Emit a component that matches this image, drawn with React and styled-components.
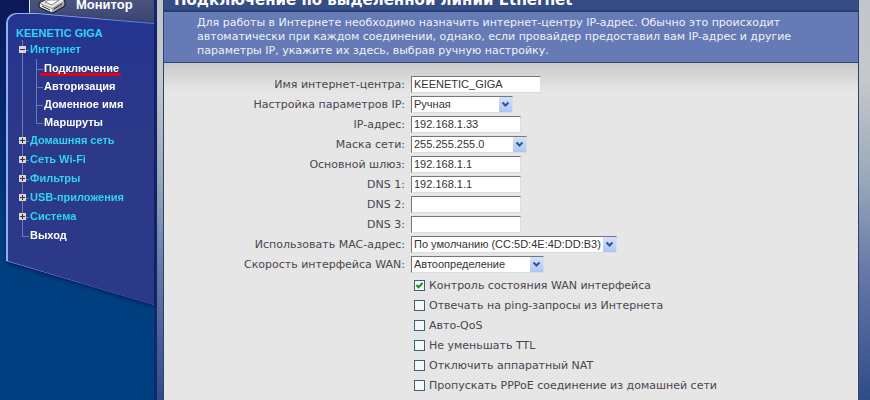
import { useState } from 'react'
import styled, { createGlobalStyle } from 'styled-components'

const GlobalStyle = createGlobalStyle`
  * {
    box-sizing: border-box;
  }
  body {
    margin: 0;
    background: #004080;
    font-family: 'DejaVu Sans', Verdana, sans-serif;
    font-size: 11px;
    color: #4c4450;
  }
`

const Page = styled.div`
  display: flex;
  height: 100vh;
  overflow: hidden;
`

const Sidebar = styled.aside`
  flex: 0 0 154px;
  padding-left: 6px;
  background: linear-gradient(#0c1858, #08246a 90px, #004080 240px);
  font-family: 'Liberation Sans', Arial, sans-serif;
  font-weight: bold;
`

const MonitorTab = styled.a`
  display: flex;
  align-items: flex-start;
  gap: 8px;
  height: 24px;
  margin-left: 23px;
  padding-left: 8px;
  border-left: 1px solid #dfe4f0;
  background: linear-gradient(#4a557e, #3a4372);
  color: #fff;
  font-size: 13px;
  line-height: 10px;
  text-decoration: none;
`

const MenuShadow = styled.div`
  position: relative;
  margin-top: -11px;
  filter: drop-shadow(0 2px 2px #06205c);
`

const MenuEdge = styled.div`
  padding: 1px 0 0 2px;
  border-top-left-radius: 10px;
  background: linear-gradient(100deg, #8fb0f4 20%, #5a76c4 80%);
  clip-path: polygon(0 0, 20% 0, 100% 10px, 100% 100%, 0 calc(100% - 44px));
`

const Menu = styled.nav`
  min-height: 291px;
  padding: 10px 0 0 8px;
  border-top-left-radius: 9px;
  background: linear-gradient(#24348f, #2c3888 120px);
  clip-path: polygon(0 0, 20% 0, 100% 10px, 100% 100%, 0 calc(100% - 44px));
`

const DeviceName = styled.div`
  height: 16px;
  color: #2fd3f5;
  font-size: 11px;
  line-height: 18px;
`

const Tree = styled.ul`
  margin: 0;
  padding: 0;
  list-style: none;
  line-height: ${(props) => props.$nested ? '18px' : '19px'};
`

const Branch = styled.li`
  position: relative;
  padding-left: 14px;
  &::before {
    content: '';
    position: absolute;
    left: 6px;
    top: 0;
    width: 6px;
    height: 10px;
    border-left: 1px solid #7079b4;
    border-bottom: 1px solid #7079b4;
  }
  &:not(:last-child)::after {
    content: '';
    position: absolute;
    left: 6px;
    top: 0;
    bottom: 0;
    border-left: 1px solid #7079b4;
  }
`

const Toggle = styled.button`
  position: absolute;
  z-index: 1;
  left: 3px;
  top: 6px;
  width: 7px;
  height: 7px;
  padding: 0;
  border: 0;
  background:
    linear-gradient(#333, #333) center / 5px 1px no-repeat,
    linear-gradient(#333, #333) center / ${(props) => props.$open ? '0 0' : '1px 5px'} no-repeat,
    #d9d6dc;
`

const MenuLink = styled.a`
  display: block;
  width: fit-content;
  color: ${(props) => props.$plain ? '#fff' : '#2fd3f5'};
  font-size: 11px;
  text-decoration: none;
`

const ActiveLink = styled(MenuLink)`
  margin-left: -4px;
  padding: 0 2px 0 4px;
  background: linear-gradient(#e8000e, #e8000e) 0 14px / 100% 3px no-repeat;
`

const Edge = styled.div`
  flex: 0 0 ${(props) => props.$left ? '9px' : '11px'};
  border-left: ${(props) => props.$left ? '3px solid #14266c' : '0'};
  background: linear-gradient(#c2c5ca, #c6c8ca 80px, #98a8b8 180px, #6878a8 270px, #2f4c88 400px);
`

const Main = styled.main`
  display: flex;
  flex: 1;
  flex-direction: column;
  min-width: 0;
  border: 1px solid #2c4272;
  border-width: 0 1px;
`

const Title = styled.h1`
  flex: none;
  height: 12px;
  margin: 0;
  padding-left: 10px;
  overflow: hidden;
  border-bottom: 2px solid #253d73;
  background: #354c84;
  color: #fff;
  font-size: 15px;
  line-height: 0;
  white-space: nowrap;
`

const Intro = styled.p`
  margin: 0;
  padding: 4px 60px 4px 33px;
  border-bottom: 1px solid #2c4272;
  background: #667bb5;
  color: #eef1fa;
  line-height: 14px;
`

const Form = styled.form`
  flex: 1;
  padding-top: 11px;
  background: linear-gradient(#cacaca, #e6e6e6 28px);
`

const Row = styled.div`
  display: grid;
  grid-template-columns: 241px 1fr;
  column-gap: 6px;
  align-items: center;
  height: 20px;
`

const Label = styled.label`
  text-align: right;
`

const TextInput = styled.input`
  width: ${(props) => props.$width}px;
  height: 17px;
  padding: 0 2px;
  border: 1px solid;
  border-color: #77757a #dcdcdc #dcdcdc #77757a;
  border-radius: 0;
  background: #fff;
  color: #333;
  font: 11px 'Liberation Sans', Arial, sans-serif;
`

const SelectBox = styled.div`
  position: relative;
  width: ${(props) => props.$width}px;
  height: 17px;
`

const Select = styled(TextInput).attrs({ as: 'select' })`
  display: block;
  width: 100%;
  appearance: none;
`

const Arrow = styled.svg`
  position: absolute;
  top: 1px;
  right: 1px;
  width: 13px;
  height: 15px;
  background: linear-gradient(#d4e2fb, #abc6f5);
  pointer-events: none;
`

const Options = styled.div`
  padding: 1px 0 0 250px;
`

const CheckRow = styled.div`
  display: flex;
  align-items: center;
  gap: 4px;
  height: 20px;
`

const Checkbox = styled.input`
  width: 11px;
  height: 11px;
  margin: 0;
  appearance: none;
  border: 1px solid #3c6078;
  background: #f4f8f8;
  &:checked {
    background: #f4f8f8 url("data:image/svg+xml,%3Csvg xmlns='http://www.w3.org/2000/svg' viewBox='0 0 9 9'%3E%3Cpath d='M1.5 4l2 2.3L7.5 2' fill='none' stroke='%23218a2c' stroke-width='2'/%3E%3C/svg%3E");
  }
`

const MENU = [
  { title: 'Интернет', items: ['Подключение', 'Авторизация', 'Доменное имя', 'Маршруты'] },
  { title: 'Домашняя сеть' },
  { title: 'Сеть Wi-Fi' },
  { title: 'Фильтры' },
  { title: 'USB-приложения' },
  { title: 'Система' },
]

const FIELDS = [
  { id: 'name', label: 'Имя интернет-центра:', value: 'KEENETIC_GIGA', width: 130 },
  { id: 'mode', label: 'Настройка параметров IP:', value: 'Ручная', width: 102, select: true },
  { id: 'ip', label: 'IP-адрес:', value: '192.168.1.33', width: 110 },
  { id: 'mask', label: 'Маска сети:', value: '255.255.255.0', width: 116, select: true },
  { id: 'gateway', label: 'Основной шлюз:', value: '192.168.1.1', width: 110 },
  { id: 'dns1', label: 'DNS 1:', value: '192.168.1.1', width: 110 },
  { id: 'dns2', label: 'DNS 2:', value: '', width: 110 },
  { id: 'dns3', label: 'DNS 3:', value: '', width: 110 },
  { id: 'mac', label: 'Использовать MAC-адрес:', value: 'По умолчанию (CC:5D:4E:4D:DD:B3)', width: 206, select: true },
  { id: 'speed', label: 'Скорость интерфейса WAN:', value: 'Автоопределение', width: 133, select: true },
]

const OPTIONS = [
  { id: 'wan', label: 'Контроль состояния WAN интерфейса', checked: true },
  { id: 'ping', label: 'Отвечать на ping-запросы из Интернета' },
  { id: 'qos', label: 'Авто-QoS' },
  { id: 'ttl', label: 'Не уменьшать TTL' },
  { id: 'nat', label: 'Отключить аппаратный NAT' },
  { id: 'pppoe', label: 'Пропускать PPPoE соединение из домашней сети' },
]

const MonitorIcon = () => (
  <svg width="30" height="14" viewBox="0 0 30 14" aria-hidden="true">
    <path d="M1 3L8 0h17l2 1v5L15 13h-2L1 7z" fill="#8d8f94" stroke="#12131c" />
    <path d="M2 3l6-3h17l1 1-12 7z" fill="#e6e6e2" />
    <path d="M7 2l4-2h10l-7 5z" fill="#fff" stroke="#54575f" strokeWidth=".7" />
    <path d="M2 4l12 5v3L2 7z" fill="#f4f4f0" />
    <path d="M14 9l12-7v3l-12 7z" fill="#a9abae" />
    <path d="M4 6l8 4M16 9l8-5" stroke="#25262e" />
  </svg>
)

const MenuBranch = ({ title, items }) => {
  const [open, setOpen] = useState(Boolean(items))
  return (
    <Branch>
      <Toggle type="button" aria-label={title} $open={open} onClick={() => setOpen(!open)} />
      <MenuLink href="#">{title}</MenuLink>
      {items && open && (
        <Tree $nested>
          {items.map((item, i) => (
            <Branch key={item}>
              {i === 0
                ? <ActiveLink href="#" $plain>{item}</ActiveLink>
                : <MenuLink href="#" $plain>{item}</MenuLink>}
            </Branch>
          ))}
        </Tree>
      )}
    </Branch>
  )
}

const Field = ({ id, label, value, width, select }) => (
  <Row>
    <Label htmlFor={id}>{label}</Label>
    {select ? (
      <SelectBox $width={width}>
        <Select id={id}><option>{value}</option></Select>
        <Arrow viewBox="0 0 13 15">
          <path d="M3.500 5.500l3 3 3-3" fill="none" stroke="#35548c" strokeWidth="2" />
        </Arrow>
      </SelectBox>
    ) : (
      <TextInput id={id} type="text" defaultValue={value} $width={width} />
    )}
  </Row>
)

const App = () => (
  <>
    <GlobalStyle />
    <Page>
      <Sidebar>
        <MonitorTab href="#"><MonitorIcon />Монитор</MonitorTab>
        <MenuShadow>
          <MenuEdge>
            <Menu>
              <DeviceName>KEENETIC GIGA</DeviceName>
              <Tree>
                {MENU.map((entry) => <MenuBranch key={entry.title} {...entry} />)}
                <Branch><MenuLink href="#" $plain>Выход</MenuLink></Branch>
              </Tree>
            </Menu>
          </MenuEdge>
        </MenuShadow>
      </Sidebar>
      <Edge $left />
      <Main>
        <Title>Подключение по выделенной линии Ethernet</Title>
        <Intro>
          Для работы в Интернете необходимо назначить интернет-центру IP-адрес. Обычно это происходит
          автоматически при каждом соединении, однако, если провайдер предоставил вам IP-адрес и другие
          параметры IP, укажите их здесь, выбрав ручную настройку.
        </Intro>
        <Form>
          {FIELDS.map((field) => <Field key={field.id} {...field} />)}
          <Options>
            {OPTIONS.map(({ id, label, checked }) => (
              <CheckRow key={id}>
                <Checkbox id={id} type="checkbox" defaultChecked={checked} />
                <label htmlFor={id}>{label}</label>
              </CheckRow>
            ))}
          </Options>
        </Form>
      </Main>
      <Edge />
    </Page>
  </>
)

export default App
